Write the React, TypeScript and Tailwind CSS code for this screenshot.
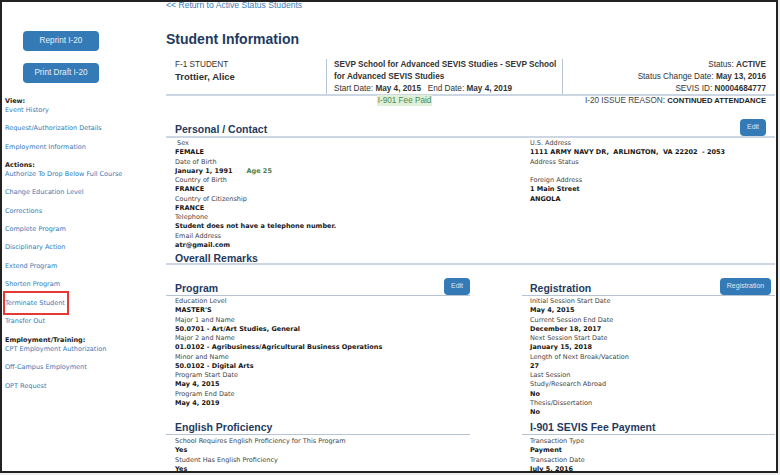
const linkClass = 'block h-[9px] leading-[9px] text-[#337ab7]';

function SideLinks({ items }: { items: string[] }) {
  return (
    <div className="flex flex-col gap-[9.4px]">
      {items.map((item) => (
        <a key={item} className={linkClass}>
          {item}
        </a>
      ))}
    </div>
  );
}

function SideTitle({ children }: { children: string }) {
  return <div className="h-[9px] font-bold leading-[9px] text-[#222]">{children}</div>;
}

function Sidebar() {
  return (
    <aside className="relative w-[164px] shrink-0 pl-[3px] font-['DejaVu_Sans',sans-serif] text-[6.5px]">
      <div className="flex flex-col items-start gap-3 pl-[18px] pt-[29px] font-['Liberation_Sans',sans-serif]">
        <button className="h-5 w-[76px] rounded-sm bg-[#337ab7] text-[8.2px] text-[#e8f0f8]">Reprint I-20</button>
        <button className="h-5 w-[76px] rounded-sm bg-[#337ab7] text-[8.2px] text-[#e8f0f8]">Print Draft I-20</button>
      </div>
      <div className="mt-[14px]">
        <SideTitle>View:</SideTitle>
        <SideLinks items={['Event History', 'Request/Authorization Details', 'Employment Information']} />
      </div>
      <div className="mt-[9px]">
        <SideTitle>Actions:</SideTitle>
        <SideLinks
          items={[
            'Authorize To Drop Below Full Course',
            'Change Education Level',
            'Corrections',
            'Complete Program',
            'Disciplinary Action',
            'Extend Program',
            'Shorten Program',
            'Terminate Student',
            'Transfer Out',
          ]}
        />
      </div>
      <div className="mt-[10px]">
        <SideTitle>Employment/Training:</SideTitle>
        <SideLinks items={['CPT Employment Authorization', 'Off-Campus Employment', 'OPT Request']} />
      </div>
      {/* red annotation drawn over the screenshot */}
      <div className="absolute left-[1px] top-[289px] h-[24px] w-[66px] border-2 border-[#e53935]" />
    </aside>
  );
}

function Heading({ children, className = '' }: { children: string; className?: string }) {
  return (
    <h2 className={`font-['Liberation_Sans',sans-serif] text-[10.5px] font-bold leading-[14px] text-[#1f3a60] ${className}`}>
      {children}
    </h2>
  );
}

function BlueButton({ children, className = '' }: { children: string; className?: string }) {
  return (
    <button className={`h-[17px] rounded-sm bg-[#337ab7] font-['Liberation_Sans',sans-serif] text-[7px] text-[#dfe9f3] ${className}`}>
      {children}
    </button>
  );
}

function SectionHead({ title, action, className = '' }: { title: string; action?: React.ReactNode; className?: string }) {
  return (
    <div className={`flex items-end justify-between border-b border-[#b7c4d4] ${className}`}>
      <Heading>{title}</Heading>
      {action}
    </div>
  );
}

function Fields({ rows }: { rows: [string, React.ReactNode][] }) {
  return (
    <div className="font-['DejaVu_Sans',sans-serif] text-[6.5px] leading-[9.25px]">
      {rows.map(([label, value], i) => (
        <div key={i}>
          <div className="text-[#444]">{label}</div>
          {value !== null && <div className="font-bold text-[#161616]">{value}</div>}
        </div>
      ))}
    </div>
  );
}

function SummaryBox() {
  return (
    <div className="flex h-[37px] border-b-2 border-[#cdd7e4] font-['Liberation_Sans',sans-serif] text-[8.2px] leading-[12px] text-[#333]">
      <div className="w-[161px] shrink-0 border-r border-[#b7c4d4] pl-[9px]">
        <div>F-1 STUDENT</div>
        <div className="text-[9.5px] font-bold text-[#303030]">Trottier, Alice</div>
      </div>
      <div className="w-[236px] shrink-0 border-r border-[#b7c4d4] pl-[7px]">
        <div className="font-bold leading-[12px]">SEVP School for Advanced SEVIS Studies - SEVP School for Advanced SEVIS Studies</div>
        <div>
          Start Date: <b>May 4, 2015</b>&nbsp;&nbsp; End Date: <b>May 4, 2019</b>
        </div>
      </div>
      <div className="flex-1 pr-[9px] text-right">
        <div>
          Status: <b>ACTIVE</b>
        </div>
        <div>
          Status Change Date: <b>May 13, 2016</b>
        </div>
        <div>
          SEVIS ID: <b>N0004684777</b>
        </div>
      </div>
    </div>
  );
}

function Main() {
  return (
    <main className="min-w-0 flex-1">
      <a className="block h-[8px] font-['Liberation_Sans',sans-serif] text-[8.6px] leading-[7px] text-[#337ab7]">
        &lt;&lt; Return to <span className="text-[#3a7fb9]">Active Status Students</span>
      </a>
      <h1 className="mt-[20px] h-[25px] font-['Liberation_Sans',sans-serif] text-[14px] font-bold leading-[18px] text-[#1f3a60]">
        Student Information
      </h1>
      <div className="mt-[4px]">
        <SummaryBox />
      </div>
      <div className="-mt-[1px] flex h-[12px] items-start font-['Liberation_Sans',sans-serif] text-[8.2px] leading-[11px]">
        <span className="ml-[211px] w-[55px] bg-[#dff0d8] text-center text-[#4f8a4f]">I-901 Fee Paid</span>
        <span className="ml-auto pr-[9px] text-[#444]">
          I-20 ISSUE REASON: <b className="text-[7.6px] text-[#222]">CONTINUED ATTENDANCE</b>
        </span>
      </div>
      <SectionHead
        title="Personal / Contact"
        className="mt-[13px] h-[18px] border-b-2 !border-[#cdd7e4] px-[9px]"
        action={<BlueButton className="w-[26px]">Edit</BlueButton>}
      />
      <div className="flex h-[116px] pl-[9px] pt-[1px]">
        <div className="w-[355px]">
          <Fields
            rows={[
              ['\u00a0Sex', 'FEMALE'],
              ['Date of Birth', <>January 1, 1991<span className="ml-[14px] text-[#4f7f4f]">Age 25</span></>],
              ['Country of Birth', 'FRANCE'],
              ['Country of Citizenship', 'FRANCE'],
              ['Telephone', 'Student does not have a telephone number.'],
              ['Email Address', 'atr@gmail.com'],
            ]}
          />
        </div>
        <Fields
          rows={[
            ['U.S. Address', '1111 ARMY NAVY DR,\u00a0 ARLINGTON,\u00a0 VA 22202\u00a0 - 2053'],
            ['Address Status', '\u00a0'],
            ['Foreign Address', '1 Main Street'],
            ['', 'ANGOLA'],
          ]}
        />
      </div>
      <div className="h-[14px] border-b-2 border-[#cdd7e4] pl-[9px]">
        <Heading className="-mt-[3px]">Overall Remarks</Heading>
      </div>
      <div className="mt-[13px] flex">
        <div className="w-[304px] shrink-0">
          <SectionHead
            title="Program"
            className="h-[18px] pl-[9px]"
            action={<BlueButton className="w-[26px] self-start">Edit</BlueButton>}
          />
          <div className="h-[121px] pl-[9px] pt-[1px]">
            <Fields
              rows={[
                ['Education Level', "MASTER'S"],
                ['Major 1 and Name', '50.0701 - Art/Art Studies, General'],
                ['Major 2 and Name', '01.0102 - Agribusiness/Agricultural Business Operations'],
                ['Minor and Name', '50.0102 - Digital Arts'],
                ['Program Start Date', 'May 4, 2015'],
                ['Program End Date', 'May 4, 2019'],
              ]}
            />
          </div>
          <SectionHead title="English Proficiency" className="h-[18px] pl-[9px]" />
          <div className="pl-[9px] pt-[2px]">
            <Fields
              rows={[
                ['School Requires English Proficiency for This Program', 'Yes'],
                ['Student Has English Proficiency', 'Yes'],
              ]}
            />
          </div>
        </div>
        <div className="ml-[52px] flex-1">
          <SectionHead
            title="Registration"
            className="h-[18px] pl-[8px] pr-[4px]"
            action={<BlueButton className="w-[51px] self-start">Registration</BlueButton>}
          />
          <div className="h-[121px] pl-[8px] pt-[1px]">
            <Fields
              rows={[
                ['Initial Session Start Date', 'May 4, 2015'],
                ['Current Session End Date', 'December 18, 2017'],
                ['Next Session Start Date', 'January 15, 2018'],
                ['Length of Next Break/Vacation', '27'],
                ['Last Session', null],
                ['Study/Research Abroad', 'No'],
                ['Thesis/Dissertation', 'No'],
              ]}
            />
          </div>
          <SectionHead title="I-901 SEVIS Fee Payment" className="h-[18px] pl-[8px]" />
          <div className="pl-[8px] pt-[2px]">
            <Fields
              rows={[
                ['Transaction Type', 'Payment'],
                ['Transaction Date', 'July 5, 2016'],
              ]}
            />
          </div>
        </div>
      </div>
    </main>
  );
}

export default function App() {
  return (
    <div className="h-[475px] w-[780px] overflow-hidden bg-[#eeeeee]">
      <div className="flex h-[473px] w-[778px] overflow-hidden border-2 border-[#222] bg-white pr-[1px]">
        <Sidebar />
        <Main />
      </div>
    </div>
  );
}
